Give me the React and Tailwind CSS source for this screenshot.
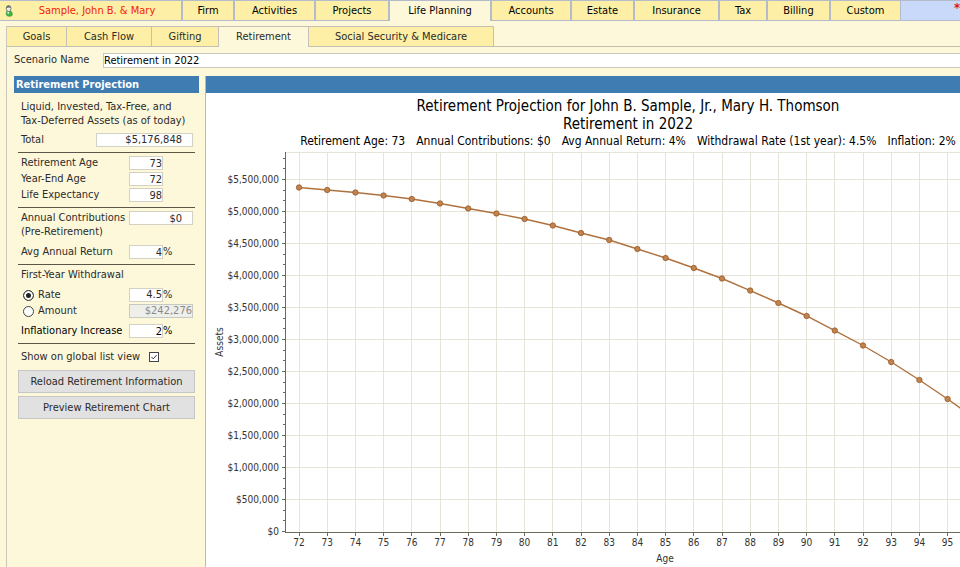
import { useState } from 'react';

const mainTabs = [
  { name: 'Firm', width: 'w-[50px]' },
  { name: 'Activities', width: 'w-[79px]' },
  { name: 'Projects', width: 'w-[72px]' },
  { name: 'Life Planning', width: 'w-[100px]' },
  { name: 'Accounts', width: 'w-[78px]' },
  { name: 'Estate', width: 'w-[61px]' },
  { name: 'Insurance', width: 'w-[83px]' },
  { name: 'Tax', width: 'w-[46px]' },
  { name: 'Billing', width: 'w-[61px]' },
  { name: 'Custom', width: 'w-[69px]' },
];

const planTabs = [
  { name: 'Goals', width: 'w-[60px]' },
  { name: 'Cash Flow', width: 'w-[85px]' },
  { name: 'Gifting', width: 'w-[67px]' },
  { name: 'Retirement', width: 'w-[90px]' },
  { name: 'Social Security & Medicare', width: 'w-[185px]' },
];

// projected assets, in thousands, from age 72
const assets = [
  5383, 5344, 5305, 5258, 5203, 5133, 5055, 4977, 4891, 4789, 4672, 4563, 4422, 4281,
  4125, 3961, 3773, 3578, 3375, 3148, 2914, 2656, 2375, 2078, 1765,
];

const ages = [
  72, 73, 74, 75, 76, 77, 78, 79, 80, 81, 82, 83, 84, 85, 86, 87, 88, 89, 90, 91, 92, 93, 94, 95,
];

const PLOT = { left: 79, right: 840, top: 4, bottom: 384 };
const xAt = (i) => 93 + i * 28.2;
const yAt = (thousands) => PLOT.bottom - thousands * 0.064;

function ClientIcon() {
  return (
    <svg width="8" height="12" viewBox="0 0 8 12" aria-hidden="true" className="shrink-0">
      <path d="M1.2 9.5 L1.6 6.4 Q3 5.4 4.8 5.6 L6.8 7 L7.4 10 Q6.6 11.4 4 11.3 Q1.8 11.2 1.2 9.5 Z" fill="#2fbf3c" stroke="#3f7d4a" strokeWidth="0.6" />
      <path d="M1.2 3.4 Q1.2 0.6 3.6 0.6 Q6 0.6 6 3.4 Q6 6.4 3.8 6.6 Q1.4 6.6 1.2 3.4 Z" fill="#eef0ea" stroke="#6d766c" strokeWidth="0.9" />
      <path d="M1.2 3.2 Q1.4 0.5 3.7 0.5 Q5.8 0.5 6 3 Q4 1.7 1.2 3.2 Z" fill="#667068" />
      <path d="M2 7.2 L3.6 9.4 L4.2 7" fill="#e6f7e4" />
    </svg>
  );
}

function Rule() {
  return <hr className="h-px border-0 bg-[#5b5648]" />;
}

function Field({ id, label, value, suffix, wide }) {
  return (
    <div className="flex h-4 items-center px-[3px]">
      <label htmlFor={id} className="w-[108px] shrink-0 whitespace-nowrap">{label}</label>
      <input
        id={id}
        defaultValue={value}
        className={`${wide ? 'w-16 pr-[10px]' : 'w-[34px]'} h-[14px] shrink-0 border border-[#d3d1c4] bg-white text-right leading-3 outline-none`}
      />
      {suffix && <span>{suffix}</span>}
    </div>
  );
}

function Radio({ label, checked, onChange }) {
  return (
    <label className="flex w-[108px] shrink-0 items-center gap-1">
      <input
        type="radio"
        name="mode"
        checked={checked}
        onChange={onChange}
        className="ml-[2px] size-[11px] appearance-none rounded-full border border-[#444] bg-white shadow-[inset_0_0_0_2px_white] checked:bg-[#222]"
      />
      {label}
    </label>
  );
}

function Chart() {
  const majors = Array.from({ length: 12 }, (_, i) => i * 500);
  const minors = Array.from({ length: 36 }, (_, i) => (i * 500) / 3).filter((_, i) => i % 3 !== 0);
  const line = assets.map((v, i) => `${xAt(i)},${yAt(v)}`).join(' ');

  return (
    <svg width="844" height="419" viewBox="0 0 844 419" role="img" aria-label="Assets by age" className="block">
      <g shapeRendering="crispEdges" strokeWidth="1">
        <g stroke="#e6e4d8">
          {majors.slice(1).map((v) => (
            <line key={v} x1={PLOT.left} x2={PLOT.right} y1={yAt(v) - 0.5} y2={yAt(v) - 0.5} />
          ))}
          {assets.map((_, i) => (
            <line key={i} x1={xAt(i)} x2={xAt(i)} y1={PLOT.top} y2={PLOT.bottom} />
          ))}
          <line x1={PLOT.left} x2={PLOT.right} y1={PLOT.top + 0.5} y2={PLOT.top + 0.5} />
        </g>
        <g stroke="#6b6a5c">
          <line x1={PLOT.left + 0.5} x2={PLOT.left + 0.5} y1={PLOT.top} y2={PLOT.bottom} />
          <line x1={PLOT.left} x2={PLOT.right} y1={PLOT.bottom + 0.5} y2={PLOT.bottom + 0.5} />
          {majors.map((v) => (
            <line key={v} x1={PLOT.left - 3} x2={PLOT.left} y1={yAt(v) - 0.5} y2={yAt(v) - 0.5} />
          ))}
          {minors.map((v) => (
            <line key={v} x1={PLOT.left - 2} x2={PLOT.left} y1={yAt(v) - 0.5} y2={yAt(v) - 0.5} />
          ))}
          {assets.map((_, i) => (
            <line key={i} x1={xAt(i)} x2={xAt(i)} y1={PLOT.bottom} y2={PLOT.bottom + 4} />
          ))}
        </g>
      </g>

      <polyline points={line} fill="none" stroke="#b0713d" strokeWidth="1.4" />
      {assets.map((v, i) => (
        <circle key={i} cx={xAt(i)} cy={yAt(v)} r="2.7" fill="#c2834c" stroke="#96592b" strokeWidth="0.8" />
      ))}

      <g fill="#333333" fontSize="10">
        {majors.map((v) => (
          <text key={v} x="73" y={Math.round(yAt(v)) + 3} textAnchor="end">
            ${(v * 1000).toLocaleString('en-US')}
          </text>
        ))}
        {ages.map((age, i) => (
          <text key={age} x={xAt(i)} y="398" textAnchor="middle">{age}</text>
        ))}
        <text x="459" y="414" textAnchor="middle">Age</text>
        <text transform="translate(17 194) rotate(-90)" textAnchor="middle">Assets</text>
      </g>
    </svg>
  );
}

export default function App() {
  const [mode, setMode] = useState('rate');
  const [global, setGlobal] = useState(true);

  return (
    <div className="flex min-h-screen flex-col overflow-hidden bg-[#fdf8da] font-['DejaVu_Sans_Condensed','DejaVu_Sans',sans-serif] text-[11px] leading-[14px] text-[#2b2b2b]">
      <nav className="flex h-[21px] border-t border-b border-[#b4bccb] bg-[#c8d9fa] text-black">
        <div className="flex shrink-0 gap-[2px] bg-[#b4bccb] pr-px">
          <button type="button" className="flex w-[181px] items-center bg-[#fdf0a6] pl-[5px] text-[#f01c08]">
            <ClientIcon />
            <span className="flex-1 text-center">Sample, John B. &amp; Mary</span>
          </button>
          {mainTabs.map((t) => (
            <button
              key={t.name}
              type="button"
              className={`${t.width} whitespace-nowrap ${t.name === 'Life Planning' ? '-mb-px bg-[#fdf8da]' : 'bg-[#fdf0a6]'}`}
            >
              {t.name}
            </button>
          ))}
        </div>
        <span className="ml-auto text-[13px] leading-[14px] font-bold text-[#e0101c]">*</span>
      </nav>

      <div className="mt-[5px] ml-[6px] flex flex-1 flex-col border-l border-[#c9c7bc]">
        <nav className="flex h-[21px] border-b border-[#c3c1b4]">
          {planTabs.map((t) => (
            <button
              key={t.name}
              type="button"
              className={`${t.width} shrink-0 border-t border-r border-[#c3c1b4] whitespace-nowrap ${t.name === 'Retirement' ? '-mb-px bg-[#fdf8da]' : 'bg-[#fdf0a6]'}`}
            >
              {t.name}
            </button>
          ))}
        </nav>

        <div className="mt-[5px] flex h-4 items-center pl-[7px]">
          <label htmlFor="scenario" className="w-[89px]">Scenario Name</label>
          <input id="scenario" defaultValue="Retirement in 2022" className="h-[15px] flex-1 border border-r-0 border-[#c9c7bc] bg-white text-black outline-none" />
        </div>

        <div className="mt-[8px] flex flex-1 gap-[6px] pl-[7px]">
          <aside className="w-[185px] shrink-0">
            <h2 className="h-[17px] bg-[#3e7cb1] pl-[2px] leading-[17px] font-bold text-white">Retirement Projection</h2>
            <form className="mr-1 ml-1 flex flex-col" onSubmit={(e) => e.preventDefault()}>
              <p className="mt-[7px] px-[3px] whitespace-nowrap">
                Liquid, Invested, Tax-Free, and
                <br />
                Tax-Deferred Assets (as of today)
              </p>
              <div className="mt-1 mb-1 flex h-4 items-center justify-between pl-[3px]">
                <label htmlFor="total">Total</label>
                <input id="total" defaultValue="$5,176,848" className="mr-[2px] h-[14px] w-[97px] border border-[#d3d1c4] bg-white pr-[10px] text-right outline-none" />
              </div>
              <Rule />
              <div className="mt-[2px] mb-1">
                <Field id="ret-age" label="Retirement Age" value="73" />
                <Field id="year-end" label="Year-End Age" value="72" />
                <Field id="life" label="Life Expectancy" value="98" />
              </div>
              <Rule />
              <div className="mt-[2px]">
                <Field id="contrib" label="Annual Contributions" value="$0" wide />
                <div className="h-[14px] px-[3px] leading-3">(Pre-Retirement)</div>
              </div>
              <div className="mt-1 mb-1">
                <Field id="return" label="Avg Annual Return" value="4" suffix="%" />
              </div>
              <Rule />
              <fieldset className="mt-[2px]">
                <legend className="h-5 px-[3px] leading-4">First-Year Withdrawal</legend>
                <div className="flex h-4 items-center px-[3px]">
                  <Radio label="Rate" checked={mode === 'rate'} onChange={() => setMode('rate')} />
                  <input aria-label="Withdrawal rate" defaultValue="4.5" className="h-[14px] w-[34px] shrink-0 border border-[#d3d1c4] bg-white text-right outline-none" />
                  <span>%</span>
                </div>
                <div className="flex h-4 items-center px-[3px]">
                  <Radio label="Amount" checked={mode === 'amount'} onChange={() => setMode('amount')} />
                  <input aria-label="Withdrawal amount" disabled={mode === 'rate'} defaultValue="$242,276" className="h-[14px] w-16 shrink-0 border border-[#c9c9c4] bg-white text-right outline-none disabled:bg-[#efefea] disabled:text-[#8a8a8a]" />
                </div>
              </fieldset>
              <div className="mt-1 mb-1 text-black">
                <Field id="inflation" label="Inflationary Increase" value="2" suffix="%" />
              </div>
              <Rule />
              <label className="mt-[5px] flex h-4 items-center gap-[9px] px-[3px] whitespace-nowrap">
                Show on global list view
                <span className="grid">
                  <input
                    type="checkbox"
                    checked={global}
                    onChange={() => setGlobal(!global)}
                    className="peer col-start-1 row-start-1 size-[10px] appearance-none border border-[#444] bg-white"
                  />
                  <svg viewBox="0 0 10 10" className="pointer-events-none invisible col-start-1 row-start-1 size-[10px] peer-checked:visible" aria-hidden="true">
                    <path d="M2.5 5 L4.2 6.8 L7.6 3.2" fill="none" stroke="#333" strokeWidth="1" />
                  </svg>
                </span>
              </label>
              <button type="button" className="mt-[5px] h-[23px] border border-[#c6c6c6] bg-[#e1e1e1] whitespace-nowrap">Reload Retirement Information</button>
              <button type="button" className="mt-[3px] h-[23px] border border-[#c6c6c6] bg-[#e1e1e1] whitespace-nowrap">Preview Retirement Chart</button>
            </form>
          </aside>

          <main className="flex min-w-0 flex-1 flex-col overflow-hidden border-l border-[#bdbba8] bg-white">
            <div className="h-[17px] shrink-0 bg-[#3e7cb1]" />
            <div className="w-[844px] text-black">
              <h1 className="mt-1 text-center text-[15px] leading-[18px]">
                Retirement Projection for John B. Sample, Jr., Mary H. Thomson
                <br />
                Retirement in 2022
              </h1>
              <div className="flex h-[15px] items-center justify-center gap-[11px] text-[12px] whitespace-nowrap">
                <span>Retirement Age: 73</span>
                <span>Annual Contributions: $0</span>
                <span>Avg Annual Return: 4%</span>
                <span>Withdrawal Rate (1st year): 4.5%</span>
                <span>Inflation: 2%</span>
              </div>
              <Chart />
            </div>
          </main>
        </div>
      </div>
    </div>
  );
}
